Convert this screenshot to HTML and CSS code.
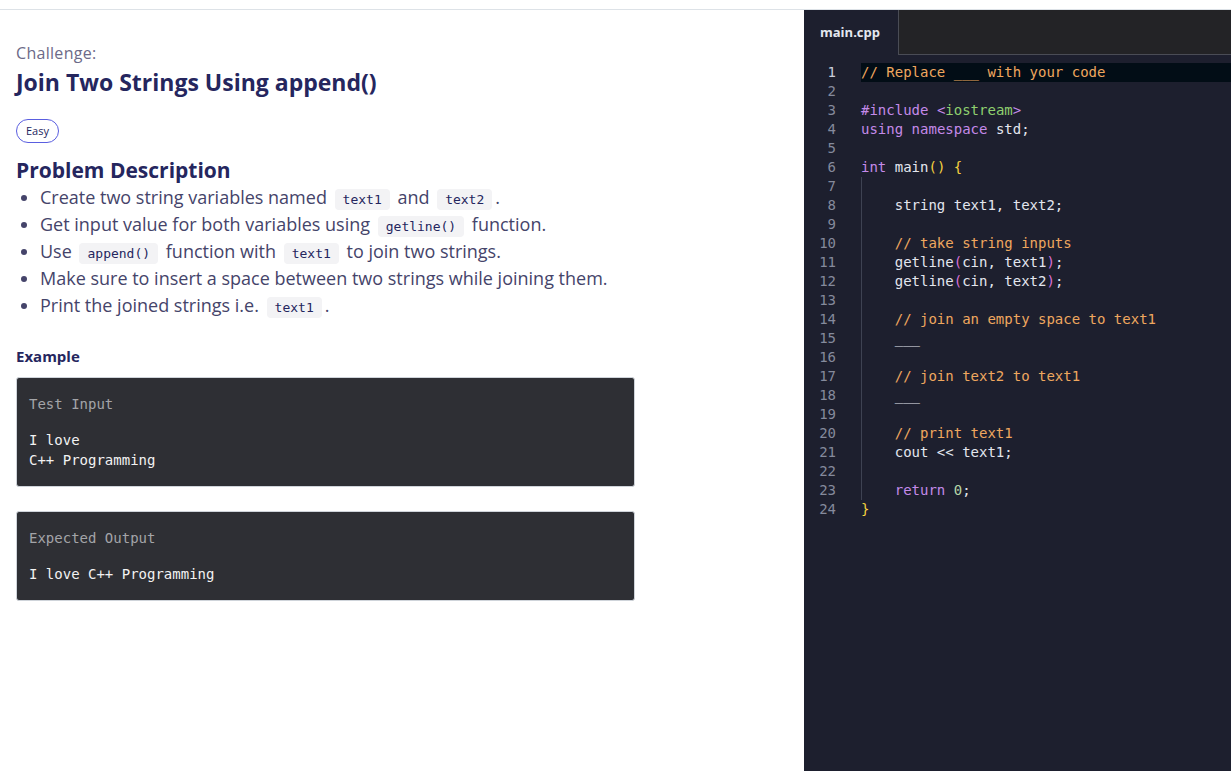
FILE: index.html
```html
<!DOCTYPE html>
<html lang="en">
<head>
<meta charset="utf-8">
<title>Join Two Strings Using append()</title>
<link rel="stylesheet" href="styles.css">
</head>
<body>
<div class="topbar"></div>
<div class="main">
  <section class="left">
    <div class="label">Challenge:</div>
    <h1 class="title">Join Two Strings Using append()</h1>
    <span class="badge">Easy</span>
    <h2 class="section-title">Problem Description</h2>
    <ul class="tasks">
      <li>Create two string variables named <code>text1</code> and <code>text2</code>.</li>
      <li>Get input value for both variables using <code>getline()</code> function.</li>
      <li>Use <code>append()</code> function with <code>text1</code> to join two strings.</li>
      <li>Make sure to insert a space between two strings while joining them.</li>
      <li>Print the joined strings i.e. <code>text1</code>.</li>
    </ul>
    <h3 class="example-title">Example</h3>
    <div class="io-box">
      <div class="io-head">Test Input</div>
      <div class="io-body">I love<br>C++ Programming</div>
    </div>
    <div class="io-box">
      <div class="io-head">Expected Output</div>
      <div class="io-body">I love C++ Programming</div>
    </div>
  </section>
  <section class="editor">
    <div class="tabs">
      <div class="tab">main.cpp</div>
      <div class="tab-fill"></div>
    </div>
    <div class="code">
      <div class="gutter">
        <div class="ln active">1</div><div class="ln">2</div><div class="ln">3</div><div class="ln">4</div><div class="ln">5</div><div class="ln">6</div><div class="ln">7</div><div class="ln">8</div><div class="ln">9</div><div class="ln">10</div><div class="ln">11</div><div class="ln">12</div><div class="ln">13</div><div class="ln">14</div><div class="ln">15</div><div class="ln">16</div><div class="ln">17</div><div class="ln">18</div><div class="ln">19</div><div class="ln">20</div><div class="ln">21</div><div class="ln">22</div><div class="ln">23</div><div class="ln">24</div>
      </div>
      <div class="lines">
        <div class="cl current"><span class="cm">// Replace ___ with your code</span></div>
        <div class="cl"></div>
        <div class="cl"><span class="kw">#include</span> <span class="kw">&lt;</span><span class="st">iostream</span><span class="kw">&gt;</span></div>
        <div class="cl"><span class="kw">using</span> <span class="kw">namespace</span> std;</div>
        <div class="cl"></div>
        <div class="cl"><span class="kw">int</span> main<span class="b1">()</span> <span class="b1">{</span></div>
        <div class="cl ind"></div>
        <div class="cl ind">    string text1, text2;</div>
        <div class="cl ind"></div>
        <div class="cl ind">    <span class="cm">// take string inputs</span></div>
        <div class="cl ind">    getline<span class="b2">(</span>cin, text1<span class="b2">)</span>;</div>
        <div class="cl ind">    getline<span class="b2">(</span>cin, text2<span class="b2">)</span>;</div>
        <div class="cl ind"></div>
        <div class="cl ind">    <span class="cm">// join an empty space to text1</span></div>
        <div class="cl ind">    ___</div>
        <div class="cl ind"></div>
        <div class="cl ind">    <span class="cm">// join text2 to text1</span></div>
        <div class="cl ind">    ___</div>
        <div class="cl ind"></div>
        <div class="cl ind">    <span class="cm">// print text1</span></div>
        <div class="cl ind">    cout &lt;&lt; text1;</div>
        <div class="cl ind"></div>
        <div class="cl ind">    <span class="kw">return</span> <span class="nu">0</span>;</div>
        <div class="cl"><span class="b1">}</span></div>
      </div>
    </div>
  </section>
</div>
</body>
</html>
```
FILE: styles.css
```css
* { box-sizing: border-box; }
html, body { margin: 0; padding: 0; height: 100%; }
body {
  font-family: "Open Sans", "Noto Sans", sans-serif;
  background: #ffffff;
  overflow: hidden;
}
.topbar {
  height: 10px;
  border-bottom: 1px solid #dde2e7;
  background: #ffffff;
}
.main {
  display: flex;
  height: 761px;
}
.left {
  flex: 0 0 804px;
  padding: 33px 16px 0 16px;
  background: #ffffff;
}
.label {
  font-size: 16px;
  line-height: 20px;
  color: #6c6a88;
  letter-spacing: 0.3px;
}
.title {
  margin: 4px 0 0 0;
  font-size: 23px;
  line-height: 30px;
  font-weight: 700;
  color: #25265e;
}
.badge {
  display: inline-block;
  margin-top: 22px;
  height: 24px;
  padding: 0 9px;
  border: 1px solid #5a5ee0;
  border-radius: 12px;
  font-size: 11px;
  line-height: 22px;
  color: #25265e;
}
.section-title {
  margin: 13px 0 0 0;
  font-size: 21px;
  line-height: 28px;
  font-weight: 700;
  color: #25265e;
}
.tasks {
  margin: 0;
  padding: 0 0 0 24px;
  list-style: disc;
}
.tasks li {
  font-size: 18px;
  line-height: 27px;
  color: #45446a;
}
.tasks code {
  font-family: "DejaVu Sans Mono", monospace;
  font-size: 13px;
  line-height: 15px;
  background: #f3f3f5;
  color: #25265e;
  border-radius: 4px;
  padding: 3px 8px;
  margin: 0 3px;
}
.example-title {
  margin: 27px 0 0 0;
  font-size: 15px;
  line-height: 20px;
  font-weight: 700;
  color: #25265e;
}
.io-box {
  width: 619px;
  margin-top: 11px;
  background: #2e2f34;
  border: 1px solid #cfd4da;
  border-radius: 3px;
  padding: 16px 12px;
  font-family: "DejaVu Sans Mono", monospace;
  font-size: 14px;
  line-height: 20px;
}
.io-box + .io-box { margin-top: 24px; }
.io-head { color: #a3a4a8; margin-bottom: 16px; }
.io-body { color: #f2f2f2; }

.editor {
  flex: 1;
  background: #1d1f2e;
  display: flex;
  flex-direction: column;
}
.tabs {
  display: flex;
  height: 45px;
}
.tab {
  width: 94px;
  padding-left: 16px;
  font-family: "Open Sans", sans-serif;
  font-weight: 700;
  font-size: 13px;
  line-height: 44px;
  color: #e4e7ef;
}
.tab-fill {
  flex: 1;
  background: #232326;
  border-left: 1px solid #4a4c55;
  border-bottom: 1px solid #4a4c55;
}
.code {
  display: flex;
  padding-top: 8px;
  font-family: "DejaVu Sans Mono", monospace;
  font-size: 14px;
  line-height: 19px;
}
.gutter {
  width: 57px;
  padding-right: 25px;
  text-align: right;
  color: #858a9c;
}
.ln { height: 19px; }
.ln.active { color: #c9cedb; }
.lines {
  flex: 1;
  color: #e3e6ee;
}
.cl { height: 19px; white-space: pre; }
.cl.current { background: #020d16; }
.cl.ind { box-shadow: inset 1px 0 0 #3e4252; }
.cm { color: #efa75f; }
.kw { color: #c48ae9; }
.st { color: #8fcf6f; }
.b1 { color: #f6d13f; }
.b2 { color: #d86fd6; }
.nu { color: #b5d6a8; }
```
